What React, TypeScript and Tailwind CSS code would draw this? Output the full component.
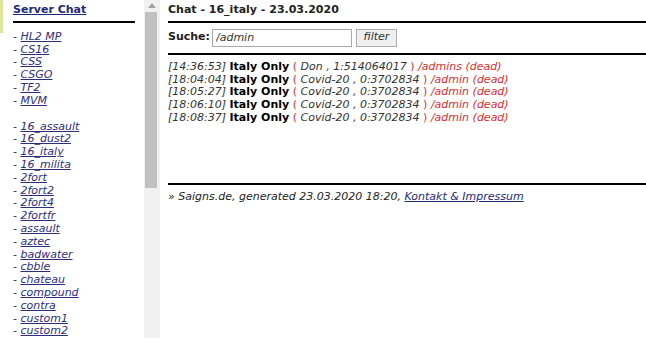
const font = { fontFamily: '"DejaVu Sans", Verdana, sans-serif' };

const games = ["HL2 MP", "CS16", "CSS", "CSGO", "TF2", "MVM"];
const maps = [
  "16_assault",
  "16_dust2",
  "16_italy",
  "16_milita",
  "2fort",
  "2fort2",
  "2fort4",
  "2fortfr",
  "assault",
  "aztec",
  "badwater",
  "cbble",
  "chateau",
  "compound",
  "contra",
  "custom1",
  "custom2",
];

const messages = [
  { time: "14:36:53", name: "Don", id: "1:514064017", text: "/admins" },
  { time: "18:04:04", name: "Covid-20", id: "0:3702834", text: "/admin" },
  { time: "18:05:27", name: "Covid-20", id: "0:3702834", text: "/admin" },
  { time: "18:06:10", name: "Covid-20", id: "0:3702834", text: "/admin" },
  { time: "18:08:37", name: "Covid-20", id: "0:3702834", text: "/admin" },
];

function LinkItem({ label }: { label: string }) {
  return (
    <li className="whitespace-nowrap">
      - <a href="#" className="italic underline text-[#2e2e80]">{label}</a>
    </li>
  );
}

export default function App() {
  return (
    <div className="flex w-[646px] h-[354px] bg-white text-[11px] leading-[12.8px] text-[#333]" style={font}>
      {/* left frame */}
      <div className="relative flex h-[338px] w-[160px] overflow-hidden">
        <div className="absolute left-0 top-0 h-[33px] w-[3px] bg-[#dfe49c]" />
        <div className="w-[144px] pl-[13px] pr-[9px] pt-[4px]">
          <a href="#" className="font-bold underline text-[#1e2a78]">Server Chat</a>
          <div className="mt-[4px] mb-[8px] h-[2px] bg-black" />
          <ul>
            {games.map((g) => (
              <LinkItem key={g} label={g} />
            ))}
          </ul>
          <ul className="mt-[13px]">
            {maps.map((m) => (
              <LinkItem key={m} label={m} />
            ))}
          </ul>
        </div>
        {/* scrollbar */}
        <div className="relative h-full w-[16px] bg-[#f0f0f0]">
          <svg className="absolute left-[4px] top-[3px]" width="8" height="5" viewBox="0 0 8 5">
            <path d="M4 0 L8 5 L0 5 Z" fill="#a3a3a3" />
          </svg>
          <div className="absolute left-[1px] top-[12px] h-[176px] w-[12px] bg-[#c1c1c1]" />
        </div>
      </div>

      {/* right frame */}
      <div className="flex-1 pl-[8px] pt-[4px]">
        <h1 className="font-bold text-[#222]">Chat - 16_italy - 23.03.2020</h1>
        <div className="mt-[4px] h-[2px] bg-black" />
        <form className="flex items-center pt-[6px] pb-[6px]">
          <span className="mr-[2px] font-bold text-[#222]">Suche:</span>
          <input
            defaultValue="/admin"
            className="h-[18px] w-[140px] border border-[#a9a9a9] px-[3px] italic text-[11px] text-[#333] outline-none"
            style={font}
          />
          <button
            type="button"
            className="ml-[4px] h-[18px] w-[41px] border border-[#adadad] bg-[#efefef] italic text-[11px] text-[#333]"
            style={font}
          >
            filter
          </button>
        </form>
        <div className="h-[2px] bg-black" />
        <div className="pt-[6px] h-[128px]">
          {messages.map((m, i) => (
            <div key={i} className="whitespace-nowrap">
              <span className="italic">[{m.time}]</span>{" "}
              <b className="text-black">Italy Only</b>{" "}
              <span className="text-[#e02b2b]">(</span>
              <span className="italic"> {m.name} , {m.id} </span>
              <span className="text-[#e02b2b]">)</span>
              <span className="italic text-[#e02b2b]"> {m.text} (dead)</span>
            </div>
          ))}
        </div>
        <div className="h-[2px] bg-black" />
        <p className="pt-[6px] italic text-[#222]">
          » Saigns.de, generated 23.03.2020 18:20,{" "}
          <a href="#" className="underline text-[#1e2a78]">Kontakt &amp; Impressum</a>
        </p>
      </div>
    </div>
  );
}
